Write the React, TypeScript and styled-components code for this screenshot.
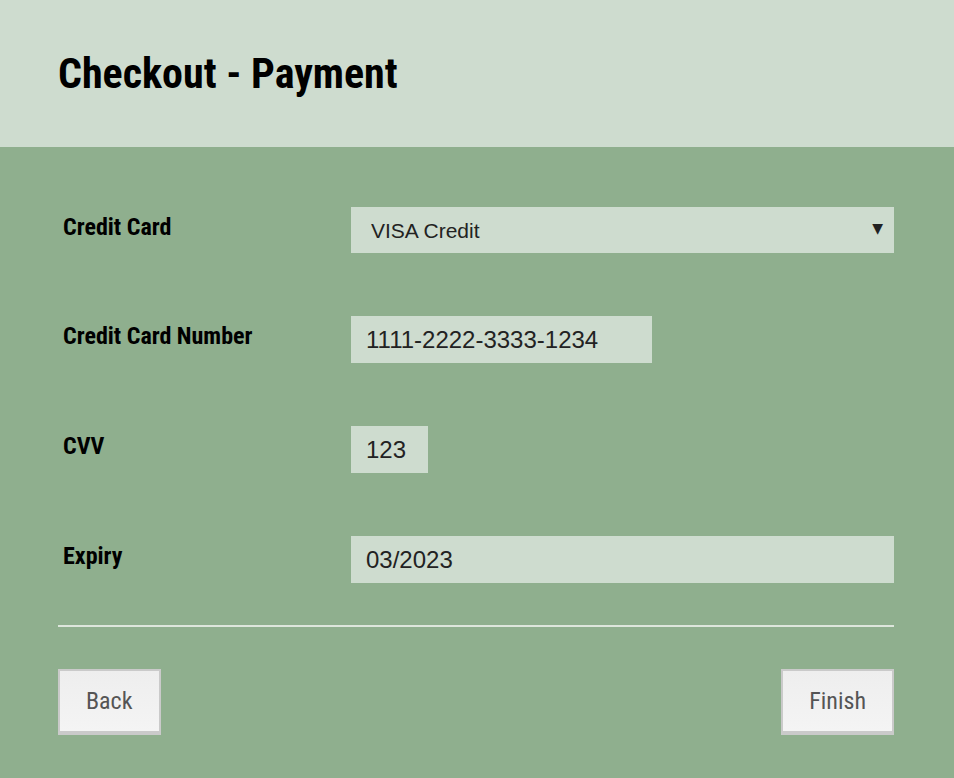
import styled, { createGlobalStyle } from 'styled-components';

const GlobalStyle = createGlobalStyle`
	html, body {
		margin: 0;
		padding: 0;
		background: #8faf8e;
	}
	* {
		box-sizing: border-box;
	}
`;

const condensed = `"Roboto Condensed", "Roboto", "Liberation Sans Narrow", sans-serif`;

const Page = styled.div`
	min-height: 778px;
	background: #8faf8e;
	display: flex;
	flex-direction: column;
`;

const Header = styled.header`
	background: #cedccf;
	height: 147px;
	padding: 0 60px 0 58px;
	display: flex;
	align-items: center;
`;

const Title = styled.h1`
	margin: 0;
	font-family: ${condensed};
	font-stretch: 75%;
	font-weight: 700;
	font-size: 42px;
	color: #000;
`;

const Main = styled.main`
	padding: 60px 60px 0 58px;
`;

const Form = styled.div`
	display: grid;
	grid-template-columns: 293px 1fr;
	row-gap: 63px;
	align-items: start;
`;

const Label = styled.label`
	padding: 6px 0 0 5px;
	font-family: ${condensed};
	font-stretch: 75%;
	font-weight: 700;
	font-size: 24px;
	color: #000;
`;

const Field = styled.input<{ $width?: number }>`
	width: ${(p) => (p.$width ? `${p.$width}px` : '100%')};
	height: 47px;
	border: none;
	outline: none;
	background: #cedccf;
	padding: 0 15px;
	font-family: "Liberation Sans", Arial, sans-serif;
	font-size: 24px;
	color: #222;
`;

const SelectWrap = styled.div`
	position: relative;
	height: 46px;

	&::after {
		content: '▼';
		position: absolute;
		right: 11px;
		top: 13px;
		font-family: "DejaVu Sans", sans-serif;
		font-size: 14px;
		color: #222;
		pointer-events: none;
	}
`;

const Select = styled.select`
	appearance: none;
	width: 100%;
	height: 46px;
	border: none;
	border-radius: 0;
	outline: none;
	background: #cedccf;
	padding: 0 20px;
	font-family: "Liberation Sans", Arial, sans-serif;
	font-size: 21px;
	color: #222;
`;

const Divider = styled.hr`
	margin: 42px 0 0;
	border: none;
	border-top: 2px solid #dde6dc;
`;

const Actions = styled.div`
	margin-top: 42px;
	display: flex;
	justify-content: space-between;
`;

const Button = styled.button`
	height: 66px;
	padding: 0 26px;
	background: linear-gradient(#eeeeee, #f4f4f4);
	border: 2px solid #cacaca;
	border-bottom-width: 4px;
	font-family: ${condensed};
	font-stretch: 75%;
	font-size: 24px;
	color: #555;
	cursor: pointer;
`;

const App: React.FC = () => {
	return (
		<>
			<GlobalStyle />
			<Page>
				<Header>
					<Title>Checkout - Payment</Title>
				</Header>
				<Main>
					<Form>
						<Label>Credit Card</Label>
						<SelectWrap>
							<Select defaultValue='visa'>
								<option value='visa'>VISA Credit</option>
								<option value='mc'>MasterCard</option>
							</Select>
						</SelectWrap>

						<Label>Credit Card Number</Label>
						<div>
							<Field $width={301} defaultValue='1111-2222-3333-1234' />
						</div>

						<Label>CVV</Label>
						<div>
							<Field $width={77} defaultValue='123' />
						</div>

						<Label>Expiry</Label>
						<Field defaultValue='03/2023' />
					</Form>

					<Divider />

					<Actions>
						<Button>Back</Button>
						<Button>Finish</Button>
					</Actions>
				</Main>
			</Page>
		</>
	);
};

export default App;
